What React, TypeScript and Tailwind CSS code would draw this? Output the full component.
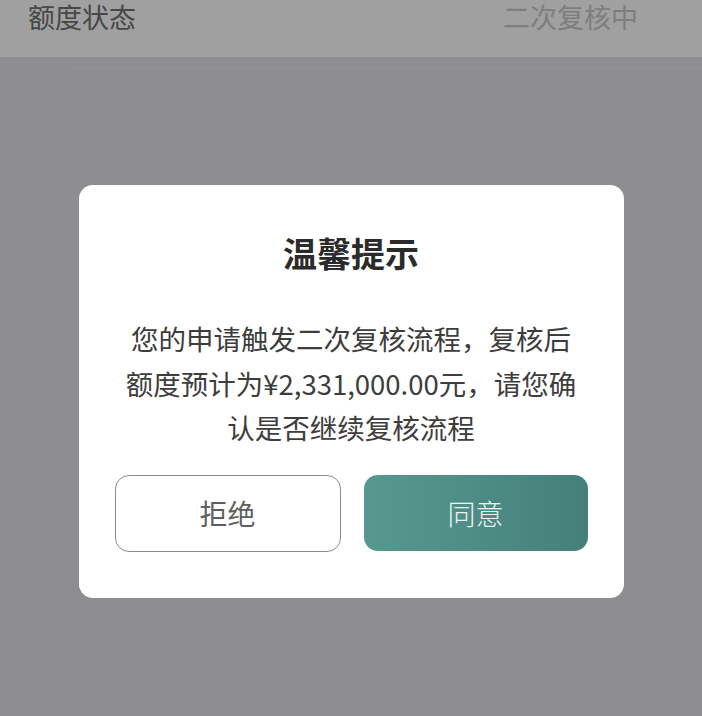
export default function App() {
  const font = { fontFamily: '"Noto Sans CJK SC", "Noto Sans", sans-serif' };
  return (
    <div className="h-[716px] w-full overflow-hidden bg-[#8e8e91]" style={font}>
      {/* page behind the dim layer */}
      <div className="flex h-[57px] items-start justify-between bg-[#a0a0a0] pl-[28px] pr-[64px] pt-[3px]">
        <span className="text-[27px] leading-[28px] text-[#474747]">额度状态</span>
        <span className="text-[27px] leading-[28px] text-[#7e7e7e]">二次复核中</span>
      </div>
      <div className="ml-[70px] mt-[11px] h-px bg-[#939395]" />

      {/* dialog */}
      <div className="mx-auto mt-[116px] w-[545px] rounded-[14px] bg-white px-9 pb-[46px] pt-[48px]">
        <h2 className="text-center text-[34px] font-bold leading-[40px] text-[#2b2b2b]">温馨提示</h2>
        <div className="mt-[43px] text-center text-[27.5px] leading-[44.5px] text-[#3d3d3d]">
          <p className="whitespace-nowrap">您的申请触发二次复核流程，复核后</p>
          <p className="whitespace-nowrap">额度预计为¥2,331,000.00元，请您确</p>
          <p className="whitespace-nowrap">认是否继续复核流程</p>
        </div>
        <div className="mt-[25px] flex gap-[23px]">
          <button className="h-[77px] flex-1 rounded-[14px] border-[1.5px] border-[#8c8c8c] bg-white text-[28px] text-[#5f5f5f]">
            拒绝
          </button>
          <button className="h-[76px] flex-1 rounded-[14px] bg-gradient-to-r from-[#55998f] to-[#45807a] text-[28px] font-light text-[#eaf4f2]">
            同意
          </button>
        </div>
      </div>
    </div>
  );
}
